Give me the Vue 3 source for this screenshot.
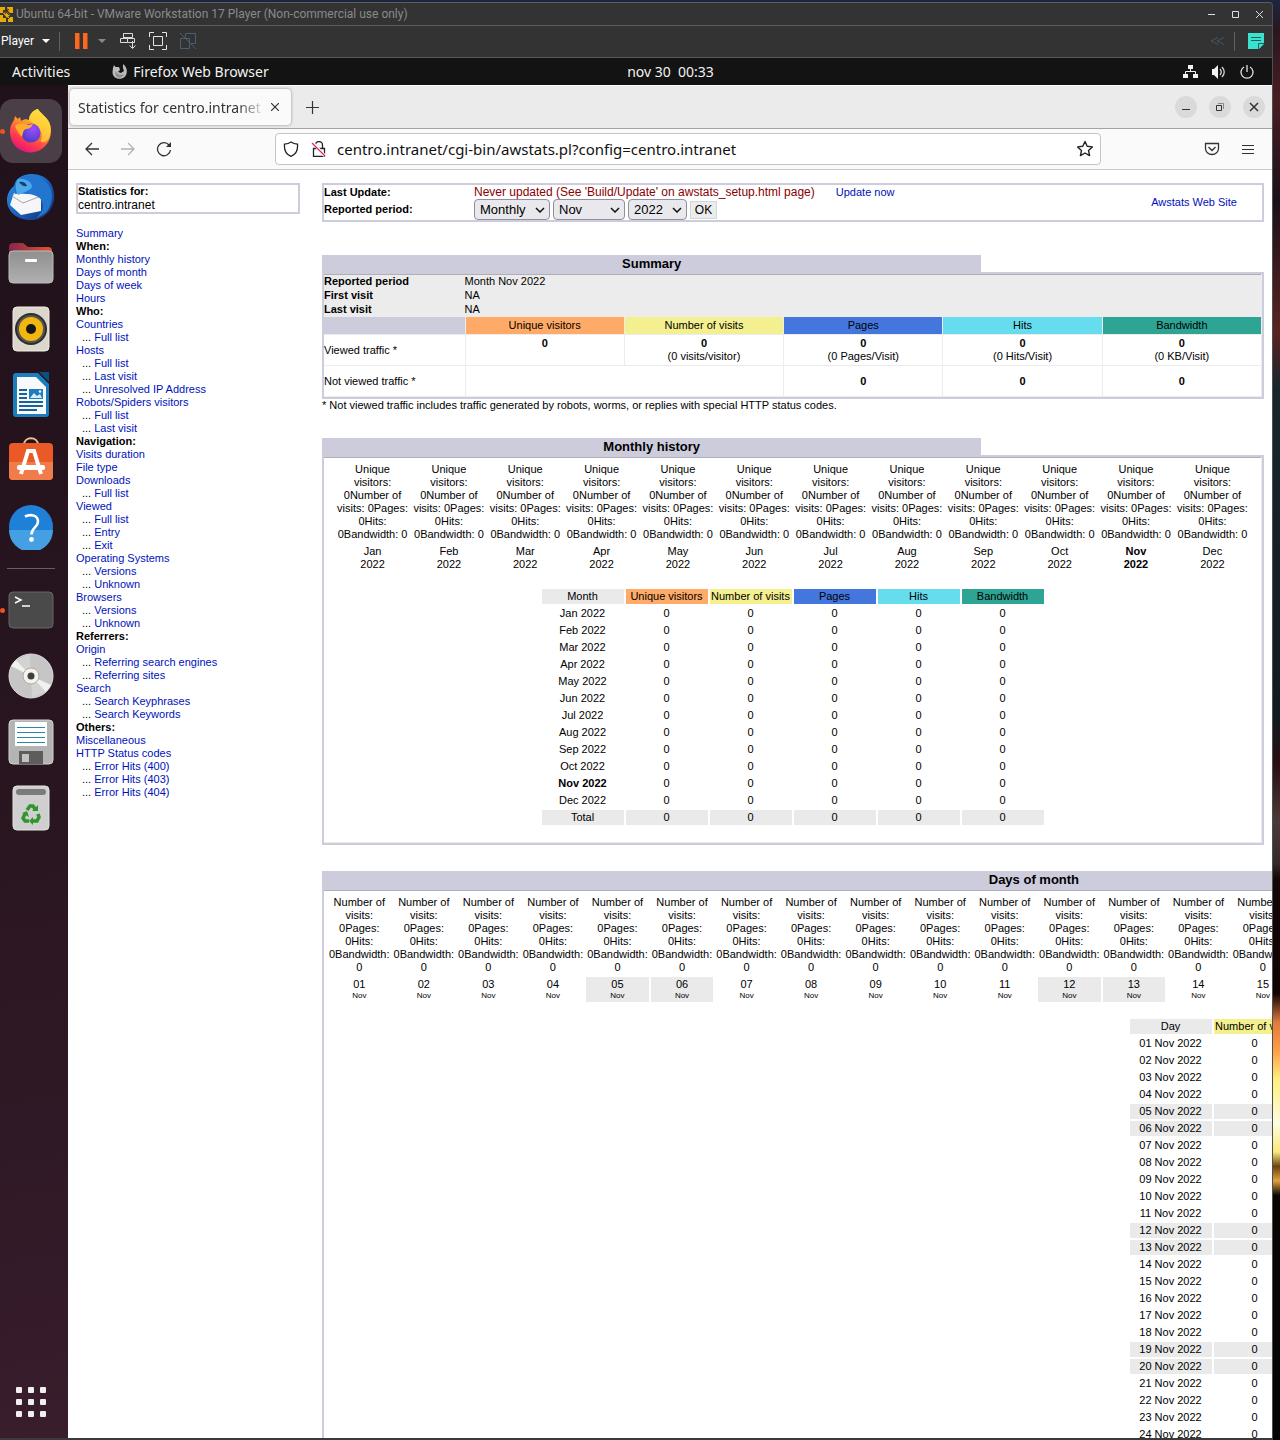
<script setup>
import { ref } from 'vue'

const url = ref('centro.intranet/cgi-bin/awstats.pl?config=centro.intranet')
const period = ref('Monthly')
const month = ref('Nov')
const year = ref('2022')

const monthNames = ['Jan', 'Feb', 'Mar', 'Apr', 'May', 'Jun', 'Jul', 'Aug', 'Sep', 'Oct', 'Nov', 'Dec']
const weekend = [5, 6, 12, 13, 19, 20, 26, 27]
const days = Array.from({ length: 30 }, (_, i) => ({
  num: String(i + 1).padStart(2, '0'),
  off: weekend.includes(i + 1),
}))

const menu = [
  { t: 'Summary' },
  { h: 'When:' },
  { t: 'Monthly history' },
  { t: 'Days of month' },
  { t: 'Days of week' },
  { t: 'Hours' },
  { h: 'Who:' },
  { t: 'Countries' },
  { s: 'Full list' },
  { t: 'Hosts' },
  { s: 'Full list' },
  { s: 'Last visit' },
  { s: 'Unresolved IP Address' },
  { t: 'Robots/Spiders visitors' },
  { s: 'Full list' },
  { s: 'Last visit' },
  { h: 'Navigation:' },
  { t: 'Visits duration' },
  { t: 'File type' },
  { t: 'Downloads' },
  { s: 'Full list' },
  { t: 'Viewed' },
  { s: 'Full list' },
  { s: 'Entry' },
  { s: 'Exit' },
  { t: 'Operating Systems' },
  { s: 'Versions' },
  { s: 'Unknown' },
  { t: 'Browsers' },
  { s: 'Versions' },
  { s: 'Unknown' },
  { h: 'Referrers:' },
  { t: 'Origin' },
  { s: 'Referring search engines' },
  { s: 'Referring sites' },
  { t: 'Search' },
  { s: 'Search Keyphrases' },
  { s: 'Search Keywords' },
  { h: 'Others:' },
  { t: 'Miscellaneous' },
  { t: 'HTTP Status codes' },
  { s: 'Error Hits (400)' },
  { s: 'Error Hits (403)' },
  { s: 'Error Hits (404)' },
]
</script>

<template>
  <div class="desktop">
    <div class="vm">
      <header class="vm-title">
        <svg class="vm-logo" width="13" height="17" viewBox="0 0 13 17">
          <path d="M0 1h5v3H3v3H0zM7 1h6v6h-3l-2-2zM0 9h3v3h3v4H0zM8 11h5v5H8zM3 7l4-1 3 3-3 3z" fill="#e5ab0c" />
          <path d="M4 4l5 5M9 3L5 8M8 13l3-3" stroke="#4c3c10" fill="none" />
        </svg>
        <span class="vm-name">Ubuntu 64-bit - VMware Workstation 17 Player (Non-commercial use only)</span>
        <button class="bare wbtn" aria-label="Minimize"><svg width="9" height="9"><path d="M1 4.500h7" stroke="#ddd" /></svg></button>
        <button class="bare wbtn" aria-label="Maximize"><svg width="9" height="9"><path d="M1.500 1.500h6v6h-6z" stroke="#ddd" fill="none" /></svg></button>
        <button class="bare wbtn" aria-label="Close"><svg width="9" height="9"><path d="M1 1l7 7M8 1L1 8" stroke="#ddd" fill="none" /></svg></button>
      </header>

      <div class="vm-tools">
        <button class="bare player">Player <svg width="8" height="4"><path d="M0 0h8L4 4z" fill="#fff" /></svg></button>
        <span class="sep"></span>
        <button class="bare pause" aria-label="Pause"><svg width="13" height="16"><path d="M0 0h4.500v16H0zM8 0h4.500v16H8z" fill="#ff671d" /></svg></button>
        <button class="bare drop" aria-label="Power options"><svg width="8" height="4"><path d="M0 0h8L4 4z" fill="#888" /></svg></button>
        <button class="bare tool" aria-label="Send Ctrl+Alt+Del">
          <svg width="18" height="18"><path d="M4.500 6V1.500h9v4h-9M1.500 6.500h7v4h-7zM8.500 6.500h7v4h-7M13.500 9v7M10.500 13.500l3 3 3-3" stroke="#dcdcdc" fill="none" /></svg>
        </button>
        <button class="bare tool" aria-label="Full screen">
          <svg width="18" height="18"><path d="M.5 5V.5H5M13 .5h4.500V5M17.500 13v4.500H13M5 17.500H.5V13M4.500 4.500h9v9h-9z" stroke="#e4e4e4" fill="none" /></svg>
        </button>
        <button class="bare tool" aria-label="Unity">
          <svg width="18" height="18"><path d="M6.500 5.500v-4h10v10h-4M1.500 6.500h9v10h-9zM1 1l16 16" stroke="#4a6072" fill="none" /></svg>
        </button>
        <span class="grow"></span>
        <svg class="rewind" width="15" height="8"><path d="M8 .5L1 4l7 3.500M14 .5L7 4l7 3.500" stroke="#46586a" fill="none" /></svg>
        <span class="sep"></span>
        <svg class="note" width="16" height="16"><path d="M0 0h16v11l-5 5H0z" fill="#3be3cf" /><path d="M3 4.500h10M3 7.500h10" stroke="#19635e" /><path d="M10.500 16v-5.500H16" stroke="#19635e" fill="none" /></svg>
      </div>

      <div class="gnome">
        <button class="bare activities">Activities</button>
        <button class="bare appname">
          <svg width="15" height="15" viewBox="0 0 15 15">
            <path d="M1 4l1-3 1.500 2L7 3l1 3-2 2 3 1 3-2-1-3V0c3 2 4 5 3.800 8C14.500 12 11.500 14.800 7.500 14.800 3.500 14.800.5 12 .5 8z" fill="#bcbcbc" />
            <path d="M4 7c1 4 5 4.500 8 3-1 3-4 4-6 3.500S2.500 10 4 7z" fill="#8d8d8d" />
          </svg>
          Firefox Web Browser
        </button>
        <span class="clock">nov 30&nbsp; 00:33</span>
        <span class="status">
          <svg width="15" height="13"><path d="M5 0h5v4H5zM0 9h5v4H0zM10 9h5v4h-5z" fill="#f2f2f2" /><path d="M7.500 4v3M2.500 9.500v-3h10v3" stroke="#f2f2f2" fill="none" /></svg>
          <svg width="16" height="14"><path d="M1 4h2l4-4v14l-4-4H1z" fill="#f2f2f2" /><path d="M9 4q2.500 3 0 6M11 2q4.500 5 0 10" stroke="#cfcfcf" stroke-width="1.300" fill="none" /></svg>
          <svg width="14" height="14"><path d="M4 2A6 6 0 1 0 10 2M7 0v7" stroke="#e2e2e2" stroke-width="1.300" fill="none" /></svg>
        </span>
      </div>

      <div class="session">
        <nav class="dock" aria-label="Dock">
          <button class="bare item active" aria-label="Firefox">
            <svg width="44" height="44" viewBox="0 0 44 44">
              <defs>
                <linearGradient id="ff1" x1=".8" y1="0" x2=".3" y2="1"><stop offset="0" stop-color="#fff44f" /><stop offset=".4" stop-color="#ff9a2a" /><stop offset=".75" stop-color="#ff3b4c" /><stop offset="1" stop-color="#e3127f" /></linearGradient>
                <radialGradient id="ff2" cx=".6" cy=".3" r=".7"><stop offset="0" stop-color="#a04bff" /><stop offset="1" stop-color="#4b3fc4" /></radialGradient>
              </defs>
              <path d="M29 0c2 4 9 8 11.500 14 5 13-3 29-18.500 29.500C9 43.500 1 34 1 23c0-6 2-9 4-12l1-4 3 3 2-2 1 4c3-2 6-2 8-1 0-5 4-10 9-11z" fill="url(#ff1)" />
              <path d="M29 0c2 4 9 8 11.500 14 2 6 1 12-1 16-3 4-6 4-8 2 3-5 1-11-3-15-3-3-7-4-8.500-6 0-5 4-10 9-11z" fill="#ffd83a" opacity=".75" />
              <circle cx="22" cy="24" r="9.500" fill="url(#ff2)" />
              <path d="M6 17c4-3 9-3 13-1l5-1c-1 3-4 5-7 5-3 1-3 4-4 8-3-3-5-6-7-11z" fill="#ffad2b" />
            </svg>
            <span class="dot"></span>
          </button>
          <button class="bare item" aria-label="Thunderbird">
            <svg width="48" height="48" viewBox="0 0 48 48">
              <defs><linearGradient id="tb" x1="0" y1="0" x2="1" y2="1"><stop offset="0" stop-color="#2f9be8" /><stop offset=".5" stop-color="#1a63c4" /><stop offset="1" stop-color="#152c66" /></linearGradient></defs>
              <path d="M9 8C14 1 26-1 35 3c9 4 13 13 12 23-1 10-8 19-20 21C12 48 0 40 0 27c0-7 4-12 8-15z" fill="url(#tb)" />
              <path d="M7 20l27 2 0 16-20 4L3 32z" fill="#f6f6f8" />
              <path d="M5 23l11 7 18-7" stroke="#a5a5ae" fill="none" />
              <path d="M12 5c8-4 20-3 26 3 8 7 9 19 3 29-3 4-7 6-12 8 6-5 8-10 6-16-1-5-6-6-11-8-6-1-11-1-16 0-3-7 0-13 4-16z" fill="#2376cf" />
              <path d="M11 6c6-1 13 2 14 7 0 4-8 6-14 9-3-5-3-12 0-16z" fill="#4ba9ea" />
              <path d="M12 9c4-1 7 1 8 4-3 1-6-1-8-4z" fill="#173d78" />
            </svg>
          </button>
          <button class="bare item" aria-label="Files">
            <svg width="46" height="42" viewBox="0 0 46 42">
              <defs><linearGradient id="fo" x1="0" x2="1"><stop offset="0" stop-color="#86284a" /><stop offset="1" stop-color="#e0542d" /></linearGradient><linearGradient id="fg" x1="0" y1="0" x2="0" y2="1"><stop offset="0" stop-color="#8f8f8f" /><stop offset="1" stop-color="#b0b0b0" /></linearGradient></defs>
              <path d="M1 5a4 4 0 0 1 4-4h10l5 4h20a4 4 0 0 1 4 4v9H1z" fill="url(#fo)" />
              <rect x="1" y="9" width="44" height="32" rx="4" fill="url(#fg)" stroke="#bdbdbd" />
              <rect x="17" y="17" width="12" height="3" rx="1" fill="#fff" />
            </svg>
          </button>
          <button class="bare item" aria-label="Rhythmbox">
            <svg width="38" height="46" viewBox="0 0 38 46">
              <rect x="1" y="1" width="36" height="44" rx="4" fill="#dcd7cc" stroke="#efece4" />
              <circle cx="19" cy="23" r="16" fill="#2d2d2d" /><circle cx="19" cy="23" r="14" fill="#555" /><circle cx="19" cy="23" r="12" fill="#f2b70f" /><circle cx="19" cy="23" r="5" fill="#161616" />
            </svg>
          </button>
          <button class="bare item" aria-label="LibreOffice Writer">
            <svg width="38" height="46" viewBox="0 0 38 46">
              <path d="M4 1h22l11 11v30a3 3 0 0 1-3 3H4a3 3 0 0 1-3-3V4a3 3 0 0 1 3-3z" fill="#1b7dbb" />
              <path d="M27 0h10v10z" fill="#0b4f7d" />
              <path d="M5 5h19l10 10v27H5z" fill="#f7f9fb" />
              <path d="M7 18h8M7 22h8M7 26h8M7 30h24M7 34h24M7 38h18" stroke="#17639a" stroke-width="2" />
              <rect x="17" y="17" width="14" height="10" fill="#1b7dbb" /><path d="M18 26l4-5 3 3 3-2 2 4z" fill="#d6ecfa" /><circle cx="28" cy="19.500" r="1.300" fill="#fff" />
            </svg>
          </button>
          <button class="bare item" aria-label="Software">
            <svg width="46" height="48" viewBox="0 0 46 48">
              <path d="M16 8c0-9 14-9 14 0" stroke="#e8c795" stroke-width="2" fill="none" />
              <rect x="1" y="6" width="44" height="37" rx="4" fill="#e95a26" /><path d="M1 25h44v14a4 4 0 0 1-4 4H5a4 4 0 0 1-4-4z" fill="#f17c4b" />
              <path d="M13 37l7-23h6l7 23" stroke="#fff" stroke-width="4" fill="none" /><rect x="9" y="28" width="28" height="5" rx="2" fill="#fff" />
            </svg>
          </button>
          <button class="bare item" aria-label="Help">
            <svg width="46" height="46" viewBox="0 0 46 46">
              <circle cx="23" cy="23" r="22" fill="#1f80d8" /><path d="M1 26h44a22 22 0 0 1-44 0z" fill="#44a0e3" />
              <path d="M17 12.500c6-3 13-1 13 5 0 6-6.500 6-6.500 13" stroke="#fff" stroke-width="2.600" fill="none" /><circle cx="23.500" cy="35.500" r="2.400" fill="#fff" />
            </svg>
          </button>
          <span class="rule"></span>
          <button class="bare item" aria-label="Terminal">
            <svg width="46" height="38" viewBox="0 0 46 38">
              <rect x="1" y="1" width="44" height="36" rx="4" fill="#4a4a4a" stroke="#666" /><path d="M7 6l6 3-6 3M14 15h8" stroke="#fff" stroke-width="1.500" fill="none" />
            </svg>
            <span class="dot"></span>
          </button>
          <button class="bare item" aria-label="Disc">
            <svg width="46" height="46" viewBox="0 0 46 46">
              <circle cx="23" cy="23" r="22" fill="#c6c6c6" stroke="#dedede" /><path d="M23 23L8 7l14-6zM23 23l15 16-14 6z" fill="#d3d3d3" /><path d="M23 23L3 13l5-6zM23 23l20 9-5 7z" fill="#f1f1f0" />
              <circle cx="23" cy="23" r="8" fill="#f3f2ee" stroke="#b4ab97" /><circle cx="23" cy="23" r="3.500" fill="#3f3f3f" />
            </svg>
          </button>
          <button class="bare item" aria-label="Floppy disk">
            <svg width="46" height="46" viewBox="0 0 46 46">
              <rect x="1" y="1" width="44" height="44" rx="4" fill="#b4b4b4" stroke="#d2d2d2" /><rect x="7" y="3" width="32" height="24" fill="#fff" />
              <path d="M9 8.500h28M9 13.500h28M9 18.500h28M9 23.500h28" stroke="#2a8aa5" /><rect x="11" y="32" width="24" height="13" fill="#5d5d5d" /><rect x="14" y="35" width="7" height="8" fill="#c2c2c2" />
            </svg>
          </button>
          <button class="bare item" aria-label="Trash">
            <svg width="38" height="46" viewBox="0 0 38 46">
              <rect x="1" y="1" width="36" height="44" rx="4" fill="#cfcfcf" stroke="#e2e2e2" /><rect x="4" y="4" width="30" height="6" rx="3" fill="#7b7b7b" />
              <g fill="none" stroke="#2f962f" stroke-width="3.500"><path d="M15 25l3-4h3l2 3" /><path d="M26 29l1 3-2 4h-4" /><path d="M17 36h-4l-2-3 2-4" /></g>
              <path d="M20 26l6 0 0-6zM21 32v8l-4-4zM10 28l5-2 2 6z" fill="#2f962f" />
            </svg>
          </button>
          <button class="bare item apps" aria-label="Show applications">
            <svg width="30" height="30"><g fill="#efefed"><template v-for="r in 3" :key="r"><rect v-for="c in 3" :key="c" :x="(c - 1) * 12" :y="(r - 1) * 12" width="6" height="6" rx="1" /></template></g></svg>
          </button>
        </nav>

        <div class="firefox">
          <div class="tabs">
            <div class="tab">
              <span class="tab-title">Statistics for centro.intranet</span>
              <button class="bare" aria-label="Close tab"><svg width="8" height="8"><path d="M0 0l8 8M8 0L0 8" stroke="#333" stroke-width="1.200" /></svg></button>
            </div>
            <button class="bare newtab" aria-label="New tab"><svg width="13" height="13"><path d="M6.500 0v13M0 6.500h13" stroke="#333" stroke-width="1.200" /></svg></button>
            <span class="grow"></span>
            <button class="bare round" aria-label="Minimize"><svg width="10" height="10"><path d="M1 7.500h8" stroke="#333" /></svg></button>
            <button class="bare round" aria-label="Restore"><svg width="10" height="10"><path d="M1.500 3.500h5v5h-5z" stroke="#333" fill="none" /><path d="M3 1.500h5.500V7" stroke="#888" fill="none" /></svg></button>
            <button class="bare round" aria-label="Close"><svg width="10" height="10"><path d="M1 1l8 8M9 1L1 9" stroke="#333" stroke-width="1.500" /></svg></button>
          </div>

          <div class="navbar">
            <button class="bare nb" aria-label="Back"><svg width="14" height="14"><path d="M14 7H1M7 1L1 7l6 6" stroke="#333" stroke-width="1.300" fill="none" /></svg></button>
            <button class="bare nb" aria-label="Forward"><svg width="14" height="14"><path d="M0 7h13M7 1l6 6-6 6" stroke="#b2b2b2" stroke-width="1.300" fill="none" /></svg></button>
            <button class="bare nb" aria-label="Reload"><svg width="16" height="16"><path d="M13 4A6.500 6.500 0 1 0 14.500 9" stroke="#333" stroke-width="1.300" fill="none" /><path d="M15 1v5h-5z" fill="#333" /></svg></button>
            <div class="urlbar">
              <svg width="16" height="16"><path d="M8 1c2 1.500 4 2 6.500 2.200C15 9 13 13.500 8 15.300 3 13.500 1 9 1.500 3.200 4 3 6 2.500 8 1z" stroke="#222" stroke-width="1.300" fill="none" /></svg>
              <svg width="16" height="16"><path d="M2.500 7.500h11v8h-11zM4.500 7V4a3.500 3.500 0 0 1 7 0v3" stroke="#222" stroke-width="1.300" fill="none" /><path d="M1 1l13 14" stroke="#fff" stroke-width="3" /><path d="M1 2l13 13" stroke="#e22850" stroke-width="1.300" /></svg>
              <input v-model="url" aria-label="Address" type="text" />
              <svg width="18" height="18"><path d="M9 1.500l2.200 4.800 5.200.6-3.900 3.500 1.100 5.200L9 13l-4.600 2.600 1.100-5.200L1.600 6.900l5.200-.6z" stroke="#222" stroke-width="1.400" stroke-linejoin="round" fill="none" /></svg>
            </div>
            <button class="bare nb" aria-label="Pocket"><svg width="16" height="14"><path d="M1.500 1.500h13v5a6.500 6 0 0 1-13 0zM4.500 5L8 8.500 11.500 5" stroke="#333" stroke-width="1.300" fill="none" /></svg></button>
            <button class="bare nb" aria-label="Menu"><svg width="12" height="11"><path d="M0 1.500h12M0 5.500h12M0 9.500h12" stroke="#333" /></svg></button>
          </div>

          <div class="page">
            <aside class="side">
              <div class="site"><b>Statistics for:</b><span>centro.intranet</span></div>
              <ul class="menu">
                <li v-for="(m, i) in menu" :key="i" :class="{ sub: m.s }">
                  <b v-if="m.h">{{ m.h }}</b>
                  <a v-else-if="m.t" href="#">{{ m.t }}</a>
                  <template v-else>... <a href="#">{{ m.s }}</a></template>
                </li>
              </ul>
            </aside>

            <main class="stats">
              <form class="head" @submit.prevent>
                <div class="fields">
                  <div class="line">
                    <b class="lab">Last Update:</b>
                    <span class="never">Never updated (See 'Build/Update' on awstats_setup.html page)</span>
                    <a class="update" href="#">Update now</a>
                  </div>
                  <div class="line controls">
                    <label class="lab" for="period">Reported period:</label>
                    <span class="pick period"><select id="period" v-model="period"><option>Monthly</option><option>Yearly</option></select><svg width="10" height="6"><path d="M1 1l4 4 4-4" stroke="#111" stroke-width="1.500" fill="none" /></svg></span>
                    <span class="pick month"><select v-model="month" aria-label="Month"><option v-for="m in monthNames" :key="m">{{ m }}</option></select><svg width="10" height="6"><path d="M1 1l4 4 4-4" stroke="#111" stroke-width="1.500" fill="none" /></svg></span>
                    <span class="pick year"><select v-model="year" aria-label="Year"><option>2022</option></select><svg width="10" height="6"><path d="M1 1l4 4 4-4" stroke="#111" stroke-width="1.500" fill="none" /></svg></span>
                    <button class="ok" type="submit">OK</button>
                  </div>
                </div>
                <a class="website" href="#">Awstats Web Site</a>
              </form>

              <section class="panel">
                <h2>Summary</h2>
                <div class="box">
                  <table class="summary">
                    <colgroup><col class="first"><col v-for="n in 5" :key="n" class="rest"></colgroup>
                    <tbody>
                      <tr class="info"><th>Reported period</th><td colspan="5">Month Nov 2022</td></tr>
                      <tr class="info"><th>First visit</th><td colspan="5">NA</td></tr>
                      <tr class="info"><th>Last visit</th><td colspan="5">NA</td></tr>
                      <tr class="cols"><td class="blank"></td><th class="u">Unique visitors</th><th class="v">Number of visits</th><th class="p">Pages</th><th class="h">Hits</th><th class="k">Bandwidth</th></tr>
                      <tr class="vals">
                        <th>Viewed traffic *</th>
                        <td><b>0</b><br>&nbsp;</td>
                        <td><b>0</b><br>(0 visits/visitor)</td>
                        <td><b>0</b><br>(0 Pages/Visit)</td>
                        <td><b>0</b><br>(0 Hits/Visit)</td>
                        <td><b>0</b><br>(0 KB/Visit)</td>
                      </tr>
                      <tr class="vals"><th>Not viewed traffic *</th><td colspan="2"></td><td><b>0</b></td><td><b>0</b></td><td><b>0</b></td></tr>
                    </tbody>
                  </table>
                </div>
                <p class="foot">* Not viewed traffic includes traffic generated by robots, worms, or replies with special HTTP status codes.</p>
              </section>

              <section class="panel">
                <h2>Monthly history</h2>
                <div class="box">
                  <table class="chart months">
                    <tbody>
                      <tr><td v-for="m in monthNames" :key="m">Unique visitors: 0Number of visits: 0Pages: 0Hits: 0Bandwidth: 0</td></tr>
                      <tr><td v-for="m in monthNames" :key="m" :class="{ current: m === 'Nov' }">{{ m }}<br>2022</td></tr>
                    </tbody>
                  </table>
                  <table class="data">
                    <thead><tr><th class="g">Month</th><th class="u">Unique visitors</th><th class="v">Number of visits</th><th class="p">Pages</th><th class="h">Hits</th><th class="k">Bandwidth</th></tr></thead>
                    <tbody>
                      <tr v-for="m in monthNames" :key="m"><td :class="{ current: m === 'Nov' }">{{ m }} 2022</td><td v-for="n in 5" :key="n">0</td></tr>
                      <tr class="g"><td>Total</td><td v-for="n in 5" :key="n">0</td></tr>
                    </tbody>
                  </table>
                </div>
              </section>

              <section class="panel wide">
                <h2>Days of month</h2>
                <div class="box">
                  <table class="chart daily">
                    <tbody>
                      <tr><td v-for="d in days" :key="d.num">Number of visits: 0Pages: 0Hits: 0Bandwidth: 0</td></tr>
                      <tr><td v-for="d in days" :key="d.num" :class="{ g: d.off }">{{ d.num }}<br><small>Nov</small></td></tr>
                    </tbody>
                  </table>
                  <table class="data">
                    <thead><tr><th class="g">Day</th><th class="v">Number of visits</th><th class="p">Pages</th><th class="h">Hits</th><th class="k">Bandwidth</th></tr></thead>
                    <tbody>
                      <tr v-for="d in days" :key="d.num" :class="{ g: d.off }"><td>{{ d.num }} Nov 2022</td><td v-for="n in 4" :key="n">0</td></tr>
                    </tbody>
                  </table>
                </div>
              </section>
            </main>
          </div>
        </div>
      </div>
    </div>
  </div>
</template>

<style>
body { margin: 0; background: #120d12; }
</style>

<style scoped>
* { box-sizing: border-box; }
svg { display: block; flex: none; }
.bare { appearance: none; border: 0; padding: 0; margin: 0; background: none; font: inherit; color: inherit; display: flex; align-items: center; }
.grow { flex: 1; }

.desktop {
  height: 100vh;
  padding: 2px 7px 0 0;
  overflow: hidden;
  background: linear-gradient(180deg, #1d2740 0, #2a1620 2%, #4a1d22 7%, #1b1019 14%, #5a2321 23%, #18262c 27%, #121a20 50%, #2b0e12 53%, #4c3a38 57%, #35282a 60%, #140506 61%, #120303 69%, #e07a3c 71%, #ff9f45 73%, #fff07e 75%, #fffde0 78%, #fbe77c 80%, #6b430e 81%, #e0a23c 82%, #0a0503 83%, #060405 100%);
}
.vm { height: 100%; display: flex; flex-direction: column; background: #333; border-top: 1px solid #5e5e5e; border-right: 1px solid #4d5050; border-bottom: 2px solid #3a3a3a; border-radius: 0 4px 0 0; overflow: hidden; }
.vm-title { height: 23px; flex: none; display: flex; align-items: center; border-bottom: 1px solid #5a5a5a; color: #8a8a8a; font: 12px Roboto, sans-serif; }
.vm-name { flex: 1; padding-left: 3px; }
.wbtn { width: 24px; justify-content: center; }
.vm-title .wbtn:last-child { margin-right: 1px; }
.vm-tools { height: 32px; flex: none; display: flex; align-items: center; border-bottom: 1px solid #5a5a5a; color: #fff; font: 12px Roboto, sans-serif; padding-bottom: 1px; }
.player { gap: 8px; padding-left: 1px; margin-right: 9px; }
.sep { width: 1px; height: 19px; background: #606060; }
.pause { margin-left: 15px; }
.drop { margin: 0 13px 0 10px; }
.tool { margin-right: 12px; }
.rewind { margin-right: 9px; }
.note { margin: 0 8px 0 13px; }

.gnome { height: 27px; flex: none; display: flex; justify-content: flex-start; align-items: center; position: relative; background: #131313; color: #f2f2f2; font: 14px "Noto Sans", sans-serif; }
.activities { padding-left: 12px; }
.appname { padding-left: 42px; gap: 6px; }
.clock { position: absolute; left: 0; right: 0; text-align: center; pointer-events: none; padding-left: 69px; }
.status { margin-left: auto; display: flex; gap: 13px; align-items: center; padding-right: 18px; }

.session { flex: 1; min-height: 0; display: flex; }
.dock { width: 68px; flex: none; display: flex; flex-direction: column; padding: 13px 6px 3px 0; background: linear-gradient(170deg, #20111a 0, #28151f 50%, #301926 78%, #391d2c 100%); }
.item { width: 100%; height: 66px; flex: none; justify-content: center; position: relative; }
.item.active::before { content: ""; position: absolute; inset: 1px 0; background: #4a3f47; border-radius: 13px; }
.item svg { position: relative; }
.dot { position: absolute; left: 0; width: 5px; height: 5px; background: #e95420; border-radius: 50%; }
.rule { height: 1px; flex: none; width: 48px; margin: 8px 7px; background: #6b5d66; }
.apps { margin-top: auto; }

.firefox { flex: 1; min-width: 0; display: flex; flex-direction: column; background: #fff; }
.tabs { height: 44px; flex: none; display: flex; align-items: center; background: #ebebeb; border-top: 1px solid #fff; border-bottom: 1px solid #a3a3a3; font: 14px "Noto Sans", sans-serif; color: #333; padding-right: 7px; }
.tab { display: flex; align-items: center; width: 221px; height: 36px; margin-left: 2px; padding: 0 12px 0 8px; background: #fafafa; border-radius: 4px; box-shadow: 0 0 3px #888; }
.tab-title { flex: 1; overflow: hidden; white-space: nowrap; margin-right: 5px; -webkit-mask-image: linear-gradient(90deg, #000 85%, transparent); mask-image: linear-gradient(90deg, #000 85%, transparent); }
.newtab { margin-left: 15px; }
.round { width: 22px; height: 22px; margin-left: 12px; border-radius: 50%; background: #dadada; justify-content: center; }
.navbar { height: 41px; flex: none; display: flex; align-items: center; background: #fafafa; border-bottom: 1px solid #c8c8c8; padding: 0 6px; }
.nb { width: 36px; height: 36px; justify-content: center; }
.urlbar { flex: 1; display: flex; align-items: center; gap: 12px; height: 32px; margin: 0 93px; padding: 0 6px 0 7px; background: #fff; border: 1px solid #c4c4c4; border-radius: 4px; }
.urlbar input { flex: 1; min-width: 0; border: 0; outline: 0; padding: 0; margin-left: -2px; background: none; color: #111; font: 15px "Noto Sans", sans-serif; }

.page { flex: 1; min-height: 0; display: flex; overflow: hidden; padding: 13px 8px 0; font: 11px/13px "Liberation Sans", Arial, sans-serif; color: #000; }
a { color: #0011bb; text-decoration: none; }
.side { width: 224px; flex: none; margin-right: 22px; }
.site { display: flex; flex-direction: column; border: 2px solid #ccccdd; height: 31px; }
.site span { font-size: 12px; line-height: 14px; }
.menu { list-style: none; margin: 13px 0 0; padding: 0; }
.sub { padding-left: 6px; }

.stats { flex: 1; min-width: 0; }
.head { display: flex; align-items: center; border: 2px solid #ccccdd; height: 39px; }
.fields { flex: 1; }
.line { display: flex; align-items: center; height: 14px; }
.controls { height: 21px; gap: 3px; }
.lab { width: 150px; font-weight: bold; }
.controls .lab { width: 147px; }
.never { color: #880000; font-size: 12px; }
.update { margin-left: 21px; }
.website { margin-right: 25px; }
.pick { position: relative; display: flex; height: 21px; }
.pick svg { position: absolute; right: 5px; top: 8px; pointer-events: none; }
.pick select { appearance: none; width: 100%; border: 1px solid #8f8f9d; border-radius: 4px; background: #e9e9ed; color: #000; padding: 0 5px; font: 13px "Liberation Sans", Arial, sans-serif; }
.period { width: 76px; }
.month { width: 72px; }
.year { width: 59px; }
.ok { height: 18px; width: 27px; padding: 0; border: 1px solid #ccd7e0; background: #ececec; color: #000; font: 12px "Liberation Sans", Arial, sans-serif; }

.panel { margin-top: 26px; }
.head + .panel { margin-top: 33px; }
h2 { width: 70%; height: 17px; margin: 0; background: #ccccdd; text-align: center; font: bold 13px/17px "Liberation Sans", Arial, sans-serif; }
.box { border: 2px solid #ccccdd; padding-right: 1px; box-shadow: inset -1px -1px #ececec; }
.box::before { content: ""; display: block; height: 1px; background: #b0b0b4; }
.foot { margin: 0; }
table { border-spacing: 0; }
th { font-weight: normal; }
.summary { width: 100%; table-layout: fixed; }
.first { width: 15%; }
.rest { width: 17%; }
.summary td, .summary th { padding: 0; text-align: center; }
.summary .info th, .summary .info td { text-align: left; height: 14px; vertical-align: top; background: #ececec; }
.summary .info th { font-weight: bold; }
.summary tr > :first-child { text-align: left; }
.summary .cols > * { height: 18px; border-bottom: 1px solid #ececec; }
.summary .cols > * + *, .summary .vals > * + * { border-left: 1px solid #ececec; }
.summary .vals > * { height: 31px; border-bottom: 1px solid #ececec; }
.blank { background: #ccccdd; }
.u { background: #ffaa66; }
.v { background: #f4f090; }
.p { background: #4477dd; }
.h { background: #66ddee; }
.k { background: #2ea495; }
.g, .g td { background: #eaeaea; }

.chart, .data { border-spacing: 2px; text-align: center; }
.chart td, .data td, .data th { padding: 1px; }
.chart { margin-top: 2px; }
.months { width: 98%; margin-left: auto; margin-right: auto; table-layout: fixed; }
.daily { margin-left: 2px; }
.daily td { width: 1px; }
small { font-size: 8px; line-height: 10px; display: block; }
.daily br { display: none; }
.data { margin: 13px auto 16px; table-layout: fixed; width: 506px; }
tr.g { background: none; }
.data td, .data th { height: 15px; width: 82px; white-space: nowrap; }
.current { font-weight: bold; }
.wide { width: 2034px; }
.wide .data { width: 422px; }
</style>
